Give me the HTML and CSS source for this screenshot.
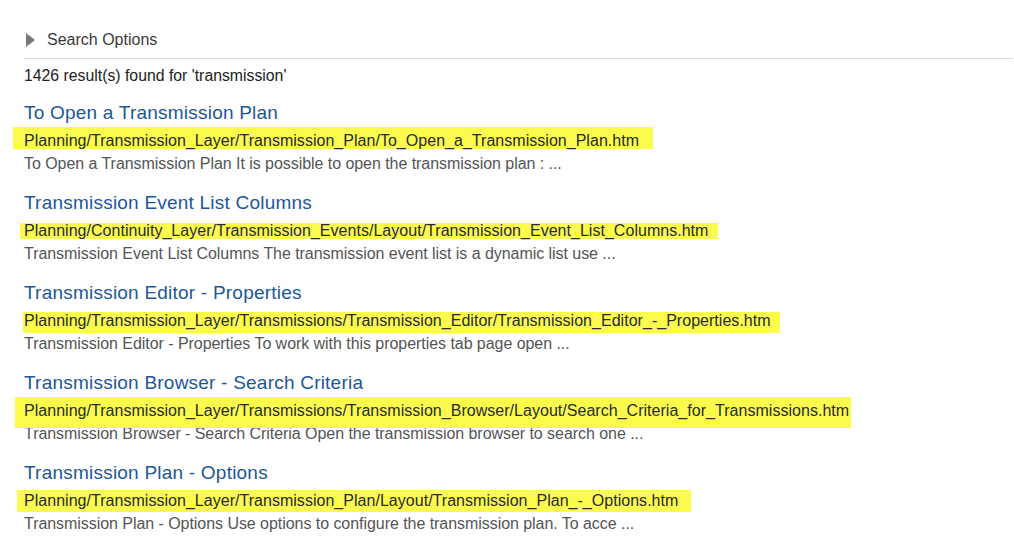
FILE: index.html
```html
<!DOCTYPE html>
<html>
<head>
<meta charset="utf-8">
<link rel="stylesheet" href="styles.css">
</head>
<body>
<div class="page">
  <div class="options">
    <span class="tri"></span>
    <span class="options-label">Search Options</span>
  </div>
  <div class="count">1426 result(s) found for 'transmission'</div>
  <div class="results">
    <div class="item">
      <div class="title">To Open a Transmission Plan</div>
      <div class="path hl1">Planning/Transmission_Layer/Transmission_Plan/To_Open_a_Transmission_Plan.htm</div>
      <div class="desc">To Open a Transmission Plan It is possible to open the transmission plan : ...</div>
    </div>
    <div class="item">
      <div class="title">Transmission Event List Columns</div>
      <div class="path hl2">Planning/Continuity_Layer/Transmission_Events/Layout/Transmission_Event_List_Columns.htm</div>
      <div class="desc">Transmission Event List Columns The transmission event list is a dynamic list use ...</div>
    </div>
    <div class="item">
      <div class="title">Transmission Editor - Properties</div>
      <div class="path hl3">Planning/Transmission_Layer/Transmissions/Transmission_Editor/Transmission_Editor_-_Properties.htm</div>
      <div class="desc">Transmission Editor - Properties To work with this properties tab page open ...</div>
    </div>
    <div class="item">
      <div class="title">Transmission Browser - Search Criteria</div>
      <div class="path hl4">Planning/Transmission_Layer/Transmissions/Transmission_Browser/Layout/Search_Criteria_for_Transmissions.htm</div>
      <div class="desc">Transmission Browser - Search Criteria Open the transmission browser to search one ...</div>
    </div>
    <div class="item">
      <div class="title">Transmission Plan - Options</div>
      <div class="path hl5">Planning/Transmission_Layer/Transmission_Plan/Layout/Transmission_Plan_-_Options.htm</div>
      <div class="desc">Transmission Plan - Options Use options to configure the transmission plan. To acce ...</div>
    </div>
  </div>
</div>
</body>
</html>
```

FILE: styles.css
```css
html, body {
  margin: 0;
  padding: 0;
  background: #ffffff;
}

body {
  font-family: "Liberation Sans", Arial, sans-serif;
  color: #333333;
}

.page {
  padding: 0 1px 0 24px;
}

.options {
  display: flex;
  align-items: center;
  gap: 12px;
  height: 37px;
  padding-top: 21px;
  box-sizing: content-box;
  border-bottom: 1px solid #dedede;
}

.tri {
  width: 0;
  height: 0;
  margin-left: 2px;
  border-top: 7px solid transparent;
  border-bottom: 7px solid transparent;
  border-left: 9px solid #7a7a7a;
}

.options-label {
  font-size: 16px;
  line-height: 20px;
  color: #3a3a3a;
}

.count {
  margin-top: 7px;
  font-size: 15.8px;
  line-height: 20px;
  color: #222222;
}

.results {
  display: flex;
  flex-direction: column;
  gap: 19px;
  margin-top: 16px;
}

.title {
  font-size: 19px;
  line-height: 22px;
  letter-spacing: 0.22px;
  color: #20579a;
}

.path {
  position: relative;
  z-index: 0;
  width: fit-content;
  margin-top: 7px;
  font-size: 16px;
  line-height: 20px;
  letter-spacing: 0.03px;
  color: #2a2a2a;
  white-space: nowrap;
}

.path::before {
  content: "";
  position: absolute;
  z-index: -1;
  background: #fbfb4e;
}

.hl1::before { left: -11px; right: -14px; top: -4px; bottom: 2px; }
.hl2::before { left: -4px; right: -10px; top: 2px; bottom: 2px; }
.hl3::before { left: -1px; right: -9px; top: 1px; bottom: -2px; }
.hl4::before { left: -9px; right: -2px; top: -4px; bottom: -7px; }
.hl5::before { left: -7px; right: -13px; top: -1px; bottom: -1px; }

.desc {
  margin-top: 4px;
  font-size: 16px;
  line-height: 18px;
  letter-spacing: -0.05px;
  color: #555555;
}
```
